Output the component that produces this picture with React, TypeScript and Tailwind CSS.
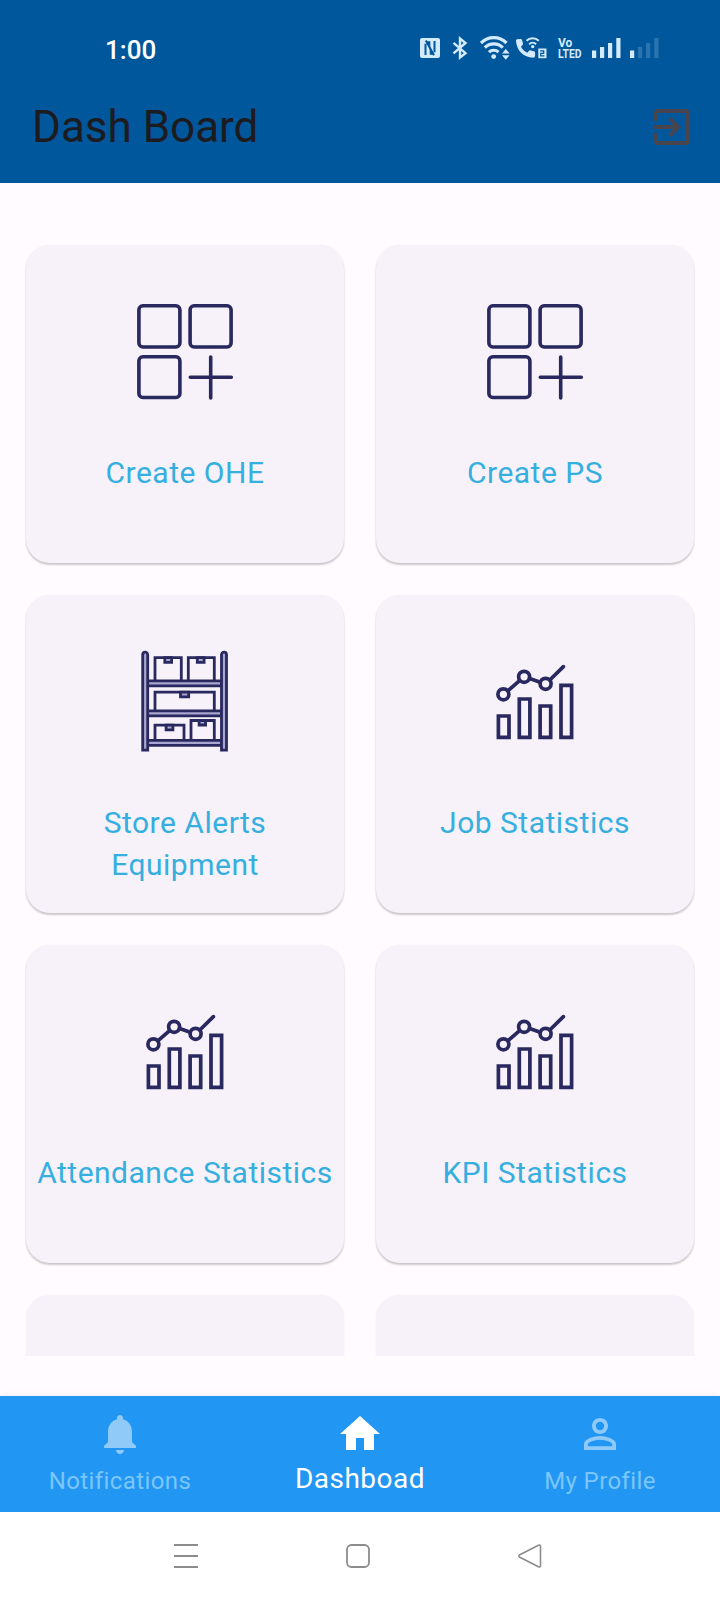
import type { ReactNode } from "react";

type IconProps = {
    className?: string;
}

interface CardProps {
    title: string;
    icon: ReactNode;
}

interface TabProps {
    label: string;
    path: string;
    active?: boolean;
}

const bellPath = "M12 22c1.1 0 2-.9 2-2h-4c0 1.1.89 2 2 2zm6-6v-5c0-3.07-1.64-5.64-4.5-6.32V4c0-.83-.67-1.5-1.5-1.5s-1.5.67-1.5 1.5v.68C7.63 5.36 6 7.92 6 11v5l-2 2v1h16v-1l-2-2z";
const homePath = "M10 20v-6h4v6h5v-8h3L12 3 2 12h3v8z";
const personPath = "M12 5.9a2.1 2.1 0 1 1 0 4.2 2.1 2.1 0 0 1 0-4.2m0 9c2.97 0 6.1 1.46 6.1 2.1v1.1H5.9V17c0-.64 3.13-2.1 6.1-2.1M12 4C9.79 4 8 5.79 8 8s1.79 4 4 4 4-1.79 4-4-1.79-4-4-4zm0 9c-2.67 0-8 1.34-8 4v3h16v-3c0-2.66-5.33-4-8-4z";

function CreateIcon() {
    return (
        <svg className="size-[104px] shrink-0" viewBox="0 0 104 104" fill="none" stroke="#29285f" strokeWidth="3.6" strokeLinecap="round">
            <rect x="5.9" y="6.8" width="41" height="41.2" rx="4" />
            <rect x="57.1" y="6.8" width="41" height="41.2" rx="4" />
            <rect x="5.9" y="57.8" width="41" height="40.7" rx="4" />
            <path d="M57.3 78.3h41M77.7 58v41" />
        </svg>
    )
}

function StoreIcon() {
    return (
        <svg className="size-[104px] shrink-0" viewBox="0 0 104 104" fill="none" stroke="#29285f" strokeWidth="2.8">
            <path d="M22 31.7V8.6h26.3v23.1M55.3 31.7V8.6h26v23.1M22 61.7V43.2h59.3v18.5M22 91.3V76.2h29v15.1M58 91.3V71.5h23.3v19.8" />
            <g fill="#aaa6d0">
                <path d="M31.8 8.6v4.8h6.8V8.6zM64.3 8.6v4.8h6.8V8.6zM47.5 43.2v4.7h8.2v-4.7zM33.1 76.2v4.6h6.8v-4.6zM66.1 71.5V76h6.5v-4.5z" />
                <path d="M14.3 31.9h74.4v4.9H14.3zM14.3 61.9h74.4v4.9H14.3zM14.3 91.4h74.4v4.9H14.3z" />
                <path d="M9.7 101.1V5.7a2.5 2.5 0 0 1 5 0v95.4zM88.5 101.1V5.7a2.5 2.5 0 0 1 5 0v95.4z" />
            </g>
        </svg>
    )
}

function ChartIcon() {
    return (
        <svg className="size-[104px] shrink-0" viewBox="0 0 104 104" fill="none" stroke="#29285f" strokeWidth="3.7" strokeLinecap="round">
            <path d="M15.4 67h10.6v21.300H15.400zM36.300 50h10.600v38.300H36.300zM57.100 57h10.600v31.300H57.100zM78 36.400h10.600v51.900H78z" />
            <path d="M24.800 41.900l11.800-10.300M46.600 29.400l10.600 3.900M66.800 31l13.600-13.400" />
            <circle cx="20.400" cy="45.300" r="5.500" />
            <circle cx="41.100" cy="27.800" r="5.500" />
            <circle cx="62.600" cy="34.800" r="5.500" />
        </svg>
    )
}

function ExitIcon({ className }: IconProps) {
    return (
        <svg className={className} viewBox="0 0 24 24" fill="currentColor">
            <path d="M10.09 15.59L11.5 17l5-5-5-5-1.41 1.41L12.67 11H3v2h9.67l-2.58 2.59zM19 3H5c-1.11 0-2 .9-2 2v4h2V5h14v14H5v-4H3v4c0 1.1.89 2 2 2h14c1.1 0 2-.9 2-2V5c0-1.1-.9-2-2-2z" />
        </svg>
    )
}

function StatusIcons() {
    return (
        <div className="flex items-center text-[#d3eaff]">
            {/* nfc */}
            <svg className="h-6 w-5 mr-3" viewBox="0 0 20 24">
                <rect x="0" y="2" width="20" height="20" rx="2" fill="currentColor" />
                <path d="M5.5 19V7.800M14.500 5v11.200M5.800 4.500L14 19.300" fill="none" stroke="#01579b" strokeWidth="2" />
                <path d="M8.600 9.500l-2.300-4.300h4v7.300zM11.400 14.500l2.300 4.300h-4v-7.300z" fill="#01579b" />
            </svg>
            {/* bluetooth */}
            <svg className="h-6 w-4 mr-3" viewBox="0 0 16 24" fill="none" stroke="currentColor" strokeWidth="2.4">
                <path d="M1.500 6.800l12 10.300L8 21.500v-19l5.500 4.500L1.500 17.300" />
            </svg>
            {/* wifi */}
            <svg className="h-6 w-[30px] mr-[6px]" viewBox="0 0 30 24" fill="none" stroke="currentColor" strokeWidth="3.2">
                <path d="M1 7a18 18 0 0 1 25.500 0M4.800 11.600a12.600 12.600 0 0 1 18 0M9 16.100a7 7 0 0 1 9.500 0" />
                <circle cx="13.700" cy="20.600" r="2.400" fill="currentColor" stroke="none" />
                <path d="M22 17.500l3.800-4.500 3.800 4.500zM22 19.300l3.800 4.500 3.800-4.500z" fill="currentColor" stroke="none" />
            </svg>
            {/* wifi calling on the second sim */}
            <svg className="h-6 w-[31px] mr-[11px]" viewBox="0 0 31 24" fill="none" stroke="currentColor">
                <path d="M1.100 3.300l3.300-.3c.8 0 1.500.4 1.700 1.200l.9 3.200c.1.600 0 1.100-.4 1.500L5 10.800c1.500 2.800 3.300 4.500 6.200 5.900l1.900-1.900c.4-.4 1-.5 1.600-.4l3.200.9c.8.2 1.200.8 1.200 1.500v3c0 1.200-.8 1.900-1.900 1.900C7.500 21.700.300 14.400 0 4.600c0-.7.400-1.200 1.100-1.300z" fill="currentColor" stroke="none" />
                <path d="M10.500 4.800a9 9 0 0 1 12.300 0M13.200 8.200a5 5 0 0 1 6.900 0" strokeWidth="2" />
                <circle cx="16.700" cy="10.600" r="1.700" fill="currentColor" stroke="none" />
                <rect x="22.300" y="12.500" width="8.200" height="9.700" fill="currentColor" stroke="none" />
                <path d="M24 14.900h3.700v2.500h-3v2.500h3.700" stroke="#01579b" strokeWidth="1.200" />
            </svg>
            {/* volte */}
            <div className="mr-[10px] flex h-6 w-6 flex-col pt-px text-[13px] font-bold leading-[11px]">
                <span className="origin-left scale-x-[0.92] whitespace-nowrap">Vo</span>
                <span className="origin-left scale-x-[0.8] whitespace-nowrap">LTED</span>
            </div>
            <svg className="h-6 w-[29px] mr-[9px]" viewBox="0 0 29 24" fill="currentColor">
                <path d="M0 14.500h4.200V22H0zM8 11h4.200v11H8zM16 7h4.200v15H16zM24.300 2h4.200v20h-4.200z" />
            </svg>
            <svg className="h-6 w-[29px]" viewBox="0 0 29 24" fill="currentColor">
                <path d="M0 14.500h4.200V22H0z" />
                <path d="M8 11h4.200v11H8zM16 7h4.200v15H16zM24.300 2h4.200v20h-4.200z" opacity="0.2" />
            </svg>
        </div>
    )
}

function Card({ title, icon }: CardProps) {
    return (
        <div className="h-[318px] rounded-[24px] bg-[#f7f2f9] pt-[54px] flex flex-col items-center shadow-[0_2px_2px_rgba(0,0,0,0.2),0_0_2px_rgba(0,0,0,0.06)]">
            {icon}
            <p className="mt-[49px] px-2 text-center text-[30px] leading-[42px] tracking-[0.5px] text-[#35afdf]">{title}</p>
        </div>
    )
}

function Tab({ label, path, active }: TabProps) {
    return (
        <button className={active ? "flex flex-1 flex-col items-center text-white" : "flex flex-1 flex-col items-center text-[#90caf9]"}>
            <svg className="mt-[14px] size-12" viewBox="0 0 24 24" fill="currentColor">
                <path d={path} />
            </svg>
            <span className={active ? "mt-[2px] text-[28px] leading-[38px] tracking-[0.5px]" : "mt-[4px] text-[24px] leading-[38px] tracking-[0.4px] text-[#7cc6fc]"}>{label}</span>
        </button>
    )
}

export default function App() {
    return (
        <div className="flex h-[1600px] w-[720px] flex-col overflow-hidden bg-[#fffbff] font-['Roboto',sans-serif]">

            <header className="h-[183px] shrink-0 bg-[#01579b]">
                <div className="flex h-[96px] items-center justify-between pl-[105px] pr-[61px]">
                    <span className="mt-[4px] text-[26px] font-medium text-white">1:00</span>
                    <StatusIcons />
                </div>
                <div className="flex h-[62px] items-center justify-between pl-8 pr-6">
                    <h1 className="text-[44px] leading-[60px] text-[#1c1b1f]">Dash Board</h1>
                    <ExitIcon className="size-12 text-[#49454f]" />
                </div>
            </header>

            <main className="h-[1173px] shrink-0 overflow-hidden px-[26px] pt-[62px]">
                <div className="grid grid-cols-2 gap-8">
                    <Card title="Create OHE" icon={<CreateIcon />} />
                    <Card title="Create PS" icon={<CreateIcon />} />
                    <Card title="Store Alerts Equipment" icon={<StoreIcon />} />
                    <Card title="Job Statistics" icon={<ChartIcon />} />
                    <Card title="Attendance Statistics" icon={<ChartIcon />} />
                    <Card title="KPI Statistics" icon={<ChartIcon />} />
                    <div className="h-[318px] rounded-[24px] bg-[#f7f2f9] shadow-[0_0_2px_rgba(0,0,0,0.06)]" />
                    <div className="h-[318px] rounded-[24px] bg-[#f7f2f9] shadow-[0_0_2px_rgba(0,0,0,0.06)]" />
                </div>
            </main>

            <nav className="mt-10 flex h-[116px] shrink-0 bg-[#2196f3] shadow-[0_-1px_6px_rgba(0,0,0,0.06)]">
                <Tab label="Notifications" path={bellPath} />
                <Tab label="Dashboad" path={homePath} active />
                <Tab label="My Profile" path={personPath} />
            </nav>

            {/* android navigation buttons */}
            <div className="flex h-[88px] shrink-0 items-center bg-white pl-[174px] text-[#8c8c8c]">
                <svg className="h-6 w-6" viewBox="0 0 24 24" fill="none" stroke="currentColor" strokeWidth="2">
                    <path d="M0 1h24M0 12h24M0 23h24" />
                </svg>
                <svg className="ml-[148px] h-6 w-6" viewBox="0 0 24 24" fill="none" stroke="currentColor" strokeWidth="1.8">
                    <rect x="1" y="1" width="22" height="22" rx="4.5" />
                </svg>
                <svg className="ml-[148px] h-6 w-6" viewBox="0 0 24 24" fill="none" stroke="currentColor" strokeWidth="1.6" strokeLinejoin="round">
                    <path d="M1.8 10.8L20.500 1.300q2-.8 2 1.200v19q0 2-2 1.200L1.800 13.200q-2-1.200 0-2.400z" />
                </svg>
            </div>
        </div>
    )
}
